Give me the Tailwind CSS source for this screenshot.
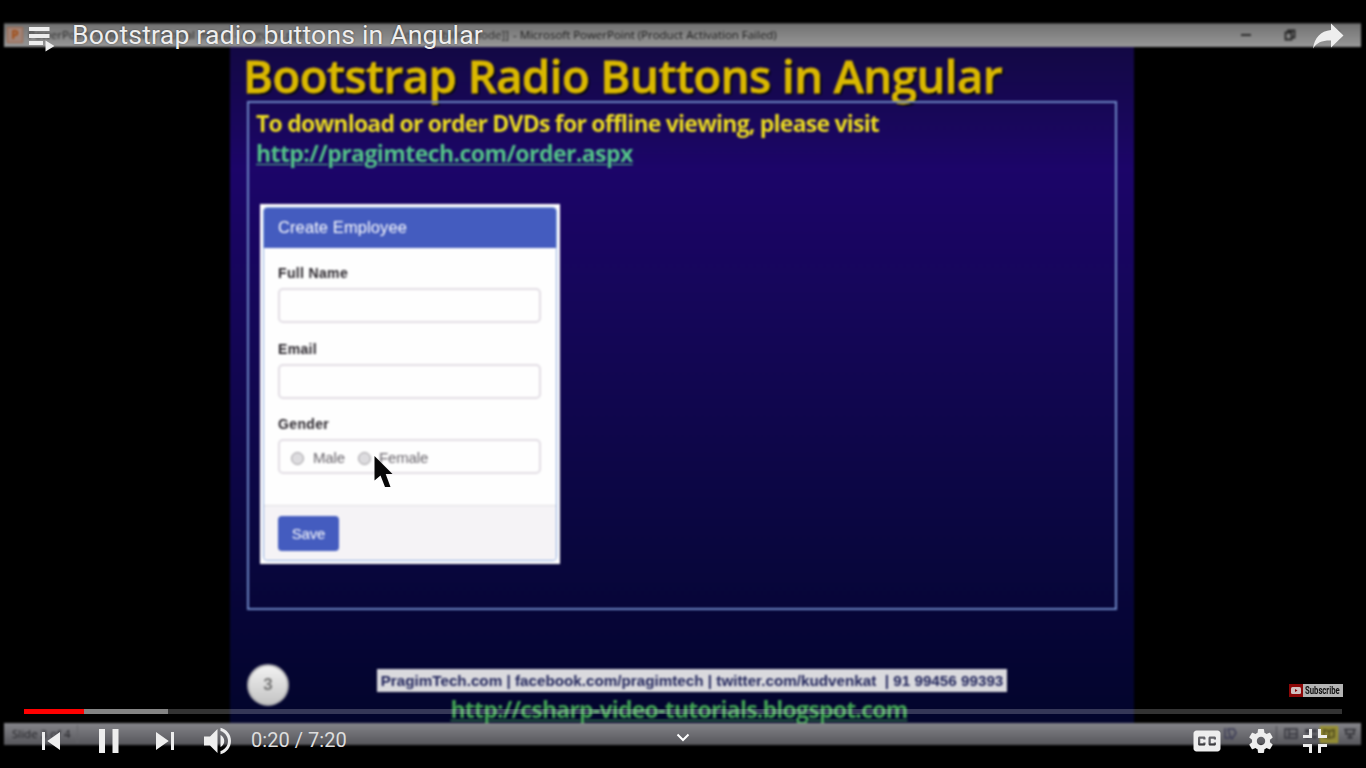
<!DOCTYPE html>
<html lang="en">
<head>
<meta charset="utf-8">
<title>Bootstrap radio buttons in Angular</title>
<script src="https://cdn.jsdelivr.net/npm/@tailwindcss/browser@4"></script>
</head>
<body class="relative h-[768px] w-[1366px] overflow-hidden bg-black font-['Liberation_Sans',sans-serif]">

<!-- Video frame -->
<main class="flex h-[768px] w-[1366px] flex-col bg-black pt-[23px] pr-[5px] pl-1 blur-[0.8px]">
  <header class="flex h-6 shrink-0 items-center border-t border-[#4a4a4a] bg-linear-to-b from-[#727272] to-[#989898] pb-[2px] pl-[3px] text-[11.5px] text-[#1a1a1a] font-['Open_Sans',sans-serif]">
    <span class="flex h-4 w-4 items-center justify-center border border-[#a0664a] bg-[#a08478] text-[12px] font-bold text-[#a34a10]">P</span>
    <span class="ml-[5px] flex w-[481px] justify-between overflow-hidden whitespace-nowrap text-[#2a2a2a]"><span>PowerPoint Slide Show - [Social media - Angular.ppt</span><span>[Compatibility Mode]]</span></span>
    <span class="ml-[4px] tracking-[-0.02px] whitespace-nowrap">- Microsoft PowerPoint (Product Activation Failed)</span>
    <span class="mr-[20px] ml-auto flex items-center gap-[33px]">
      <span class="h-[2px] w-[10px] bg-[#2c2c2c]"></span>
      <svg class="h-3 w-3" viewBox="0 0 12 12" fill="none" stroke="#262626" stroke-width="1.8"><path d="M1.500 3.500h6v7h-6zM4 3V1.500h6.500v7H8"/></svg>
      <svg class="h-3 w-3" viewBox="0 0 12 12" stroke="#3d3d3d" stroke-width="1.8"><path d="M2 2l8 8M10 2l-8 8"/></svg>
    </span>
  </header>

  <section class="ml-[226px] flex h-[676px] w-[904px] shrink-0 flex-col bg-linear-to-b from-[#130844] via-[#1c0569] via-18% to-[#03052c] pr-4 pl-[17px]">
    <h1 class="-ml-1 h-[54px] text-[45.5px] leading-[56px] font-semibold tracking-[-0.52px] whitespace-nowrap text-[#dab800] font-['Open_Sans',sans-serif] text-shadow-[2px_2px_1px_#050510] [-webkit-text-stroke:0.8px_#dab800]">Bootstrap Radio Buttons in Angular</h1>
    <div class="flex h-[509px] w-[870px] flex-col border-2 border-[#6c86c4] pl-[7px]">
      <p class="mt-1 h-[31px] text-[23px] leading-[32px] font-bold tracking-[-0.78px] whitespace-nowrap text-[#ecdc20] font-['Open_Sans',sans-serif]">To download or order DVDs for offline viewing, please visit</p>
      <p class="h-[31px] text-[23px] leading-[30px] font-bold tracking-[-0.57px] whitespace-nowrap text-[#54c488] font-['Open_Sans',sans-serif]"><span class="underline decoration-1 underline-offset-2">http://pragimtech.com/order.aspx</span></p>

      <div class="mt-[35px] ml-1 flex h-[360px] w-[300px] bg-white p-[3px]">
        <div class="flex flex-1 flex-col rounded border border-[#8fade0] bg-[#fefefe]">
          <div class="flex h-10 items-center rounded-t-[3px] bg-[#445cbf] pb-[2px] pl-[14px] text-[16.500px] tracking-[0.1px] text-white">Create Employee</div>
          <div class="flex h-[258px] flex-col border-b border-[#e0dfe2] px-[14px] pt-[15px] text-[14px]">
            <div class="h-[25px] leading-5 font-bold tracking-[0.35px] text-[#2a262c]">Full Name</div>
            <div class="h-[35px] w-[263px] rounded-[5px] border-2 border-[#e2dde4]"></div>
            <div class="mt-4 h-[25px] leading-5 font-bold tracking-[0.35px] text-[#2a262c]">Email</div>
            <div class="h-[35px] w-[263px] rounded-[5px] border-2 border-[#e2dde4]"></div>
            <div class="mt-[15px] h-[25px] leading-5 font-bold tracking-[0.35px] text-[#2a262c]">Gender</div>
            <div class="flex h-[35px] w-[263px] items-center rounded-[5px] border-2 border-[#e2dde4] pt-[3px] pl-[11px] text-[15px] tracking-[-0.15px] text-[#68646b]">
              <span class="h-[13px] w-[13px] rounded-full border border-[#9d9b9f] bg-[#dddcdf]"></span><span class="ml-[9px] w-[45px]">Male</span>
              <span class="h-[13px] w-[13px] rounded-full border border-[#9d9b9f] bg-[#dddcdf]"></span><span class="ml-2">Female</span>
            </div>
          </div>
          <div class="flex flex-1 items-start rounded-b bg-[#f5f3f6] pt-[10px] pl-[14px]">
            <div class="flex h-[35px] w-[61px] items-center justify-center rounded bg-[#445cbf] pt-px text-[15px] tracking-[-0.2px] text-white">Save</div>
          </div>
        </div>
      </div>
    </div>

    <footer class="flex h-[113px] items-start pt-[54px]">
      <div class="flex h-[42px] w-[42px] items-center justify-center rounded-full border-2 border-[#a9a9ad] bg-linear-to-b from-[#f2f2f2] to-[#c4c4c4] text-[17px] font-bold text-[#767676]">3</div>
      <div class="ml-[88px] flex w-[630px] flex-col items-center pt-[5px]">
        <div class="flex h-[23px] w-[630px] items-center justify-center bg-[#dadade] pt-px text-[15.200px] font-bold tracking-[0.02px] whitespace-nowrap text-[#22265c]">PragimTech.com | facebook.com/pragimtech | twitter.com/kudvenkat&nbsp; | 91 99456 99393</div>
        <div class="mt-[2px] -ml-[26px] h-7 text-[23px] leading-[30px] font-bold tracking-[-0.78px] whitespace-nowrap text-[#42a454] font-['Open_Sans',sans-serif]"><span class="underline decoration-1 underline-offset-2">http://csharp-video-tutorials.blogspot.com</span></div>
      </div>
    </footer>
  </section>

  <div class="relative z-10 flex h-[22px] shrink-0 items-center bg-linear-to-b from-[#85858a] to-[#56565b] pl-2 text-[11.5px] text-[#222226] font-['Open_Sans',sans-serif]">
    <span class="w-[66px] border-r border-[#65656a]">Slide 3 of 4</span>
    <span class="ml-auto flex items-center gap-[7px] pr-[5px]">
      <svg class="mr-[32px] h-[14px] w-[14px]" viewBox="0 0 14 14" fill="none" stroke="#3c3c56" stroke-width="1.500"><path d="M2 1v10h5M5 2h6l2 4-4 6-2-3z"/></svg>
      <span class="h-4 border-l border-[#4c4c52]"></span>
      <svg class="h-3 w-[14px]" viewBox="0 0 14 12" fill="none" stroke="#36363e" stroke-width="1.500"><path d="M1 1h12v9H1zM5 1v9M5 6h8"/></svg>
      <svg class="h-3 w-3" viewBox="0 0 12 12" fill="#404048"><path d="M0 1h5v4H0zM7 1h5v4H7zM0 7h5v4H0zM7 7h5v4H7z"/></svg>
      <span class="-ml-1 flex h-[17px] w-[18px] items-center justify-center border border-[#a39a20] bg-[#8f8838]"><svg class="h-3 w-3" viewBox="0 0 12 12" fill="none" stroke="#4c4718" stroke-width="1.500"><path d="M1 2l5 1 5-1v7l-5 1-5-1zM6 3v7"/></svg></span>
      <svg class="-ml-px h-3 w-3" viewBox="0 0 12 12" fill="none" stroke="#303036" stroke-width="1.500"><path d="M0 1.500h12M2 2v4h8V2M3 9.500h6M6 6v5"/></svg>
    </span>
  </div>
</main>

<svg class="absolute top-[453px] left-[373px] z-10 h-[36px] w-[22px] blur-[0.4px]" viewBox="0 0 22 36"><path d="M1.500 3V27.500L7.500 22.500L12 34H17.500L12.700 21H19.500Z" fill="#080808"/></svg>

<!-- Player controls -->
<div class="absolute inset-0 z-20 flex flex-col text-[#eee] font-['Roboto',sans-serif]">
  <div class="flex h-[70px] items-start pt-5 pr-[22px] pl-7">
    <svg class="mt-[6px] h-[27px] w-[27px] shrink-0" viewBox="0 0 27 27" fill="#eee"><path d="M1 1h20.500v4H1zM1 8h20.500v4H1zM1 15h14v4H1zM17.500 14.500l9 5.500-9 5.500z"/></svg>
    <div class="ml-[17px] text-[26.600px] leading-[29px] tracking-[0.18px] whitespace-nowrap text-shadow-[0_0_2px_#0008]">Bootstrap radio buttons in Angular</div>
    <svg class="mt-[3px] ml-auto h-[26px] w-8 shrink-0" viewBox="0 0 32 26" fill="#eee"><path d="M19 .500L31.500 12.500 19 24.500V17.500C10 17.300 5 19.500 1 25.500 2.500 15 8.500 8 19 7z"/></svg>
  </div>
  <div class="mt-auto flex h-[25px] justify-end pr-[23px]">
    <div class="flex h-[13px] w-[54px] items-center overflow-hidden bg-[#b4b4b4]">
      <span class="flex h-full w-[14px] shrink-0 items-center justify-center bg-[#8c0707]"><svg class="h-[7px] w-[10px]" viewBox="0 0 10 7"><rect width="10" height="7" rx="1.500" fill="#d0c0c0"/><path d="M4 2v3l2.500-1.500z" fill="#8c0707"/></svg></span>
      <span class="ml-[2px] origin-left scale-x-[0.7] text-[11px] leading-[13px] font-bold text-[#111]">Subscribe</span>
    </div>
  </div>
  <div class="ml-6 flex h-[5px] w-[1318px] bg-white/20"><div class="w-[60px] bg-[#f00]"></div><div class="w-[84px] bg-[#848484]"></div></div>
  <div class="flex h-[54px] items-center pr-6 pl-6">
    <svg class="h-[54px] w-[54px]" viewBox="0 0 36 36" fill="#eee"><path d="M12 12h2v12h-2zM15.500 18l8.500 6V12z"/></svg>
    <svg class="ml-[3px] h-[54px] w-[54px]" viewBox="0 0 36 36" fill="#eee"><path d="M12 10h4v16h-4zM21 10h4v16h-4z"/></svg>
    <svg class="ml-[3px] h-[54px] w-[54px]" viewBox="0 0 36 36" fill="#eee"><path d="M12 24l8.500-6L12 12zM22 12v12h2V12z"/></svg>
    <svg class="h-[54px] w-[54px]" viewBox="0 0 36 36" fill="#eee"><path d="M8 21h4l5 5V10l-5 5H8zM19 14v8c1.480-.680 2.500-2.230 2.500-4 0-1.740-1.020-3.260-2.500-4zM19 11.290C21.890 12.150 24 14.830 24 18c0 3.170-2.110 5.850-5 6.710v2.060c4.010-.910 7-4.490 7-8.770s-2.990-7.860-7-8.770z"/></svg>
    <span class="mb-[2px] ml-[5px] w-[110px] text-[20px] tracking-[0.04px] whitespace-nowrap text-[#ddd]">0:20 / 7:20</span>
    <svg class="mb-[7px] ml-[315px] h-[9px] w-[14px]" viewBox="0 0 14 9" fill="none" stroke="#fff" stroke-width="2"><path d="M1.500 1.500l5.500 5.500 5.500-5.500"/></svg>
    <svg class="ml-auto h-[54px] w-[54px]" viewBox="0 0 36 36" fill="#eee" fill-rule="evenodd"><path d="M11 11C9.900 11 9 11.900 9 13v10c0 1.100.900 2 2 2h14c1.100 0 2-.900 2-2V13c0-1.100-.900-2-2-2zM17 17h-1.500v-.500h-2v3h2V19H17v1c0 .550-.450 1-1 1h-3c-.550 0-1-.450-1-1v-4c0-.550.450-1 1-1h3c.550 0 1 .450 1 1zM24 17h-1.500v-.500h-2v3h2V19H24v1c0 .550-.450 1-1 1h-3c-.550 0-1-.450-1-1v-4c0-.550.450-1 1-1h3c.550 0 1 .450 1 1z"/></svg>
    <svg class="h-[54px] w-[54px]" viewBox="0 0 36 36" fill="#eee"><path d="m23.940 18.780c.03-.25.05-.51.05-.78 0-.27-.02-.52-.05-.78l1.680-1.320c.15-.12.19-.33.09-.51l-1.600-2.760c-.09-.17-.31-.24-.48-.17l-1.990.8c-.41-.32-.86-.58-1.350-.78l-.30-2.120c-.02-.19-.19-.33-.39-.33l-3.200 0c-.2 0-.36.14-.39.33l-.30 2.120c-.48.2-.93.47-1.350.78l-1.990-.8c-.18-.07-.39 0-.48.17l-1.600 2.760c-.10.17-.05.39.09.51l1.680 1.320c-.03.25-.05.52-.05.78 0 .26.02.52.05.78l-1.680 1.320c-.15.12-.19.33-.09.51l1.600 2.760c.09.17.31.24.48.17l1.990-.8c.41.32.86.58 1.350.78l.30 2.120c.02.19.19.33.39.33l3.200 0c.2 0 .36-.14.39-.33l.30-2.120c.48-.2.93-.47 1.350-.78l1.990.8c.18.07.39 0 .48-.17l1.600-2.760c.09-.17.05-.39-.09-.51l-1.680-1.320zm-5.940 2.010c-1.540 0-2.800-1.250-2.800-2.800 0-1.540 1.250-2.800 2.800-2.800 1.540 0 2.800 1.250 2.800 2.800 0 1.540-1.250 2.800-2.800 2.800z"/></svg>
    <svg class="h-[54px] w-[54px]" viewBox="0 0 36 36" fill="#eee"><path d="M14 14h-4v2h6v-6h-2zM22 14v-4h-2v6h6v-2zM20 26h2v-4h4v-2h-6zM10 22h4v4h2v-6h-6z"/></svg>
  </div>
</div>
</body>
</html>
